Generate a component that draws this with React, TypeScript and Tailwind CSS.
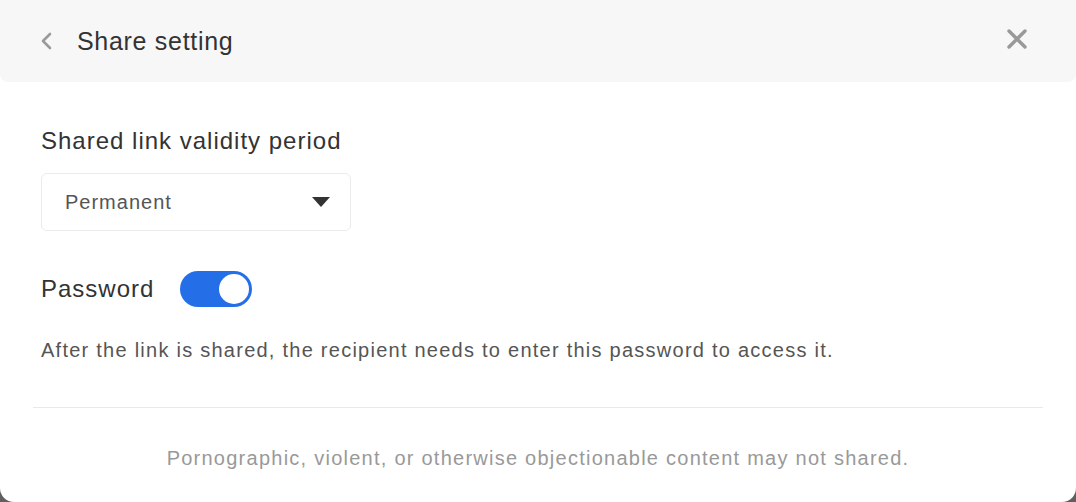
import React from "react";

export default function App() {
  return (
    <div className="w-[1076px] h-[502px] bg-[#5f5f5f] overflow-hidden" style={{ fontFamily: '"Liberation Sans", Arial, sans-serif' }}>
      <div className="w-full h-full bg-white rounded-b-[14px] flex flex-col">
        <div className="h-[82px] bg-[#f7f7f7] rounded-b-[8px] flex items-center pl-[40px] pr-[48px] shrink-0">
          <svg width="14" height="18" viewBox="0 0 14 18" className="mr-[23px]">
            <path d="M10 2 L3 9 L10 16" fill="none" stroke="#9a9a9a" strokeWidth="2.6" strokeLinecap="round" strokeLinejoin="round" />
          </svg>
          <span className="text-[25px] tracking-[0.7px] text-[#333] leading-none">Share setting</span>
          <div className="flex-1" />
          <svg width="22" height="22" viewBox="0 0 22 22" className="mb-[5px]">
            <path d="M3 3 L19 19 M19 3 L3 19" fill="none" stroke="#999" strokeWidth="3.4" strokeLinecap="round" />
          </svg>
        </div>
        <div className="flex flex-col px-[41px] pt-[44px]">
          <div className="text-[24px] tracking-[1px] text-[#333] leading-[30px]">Shared link validity period</div>
          <div className="mt-[17px] w-[310px] h-[58px] border border-[#ebebeb] rounded-[6px] flex items-center pl-[23px] pr-[20px]">
            <span className="text-[20px] tracking-[1px] text-[#555] flex-1">Permanent</span>
            <svg width="18" height="10" viewBox="0 0 18 10">
              <path d="M0 0 L18 0 L9 10 Z" fill="#333" />
            </svg>
          </div>
          <div className="mt-[40px] flex items-center h-[36px]">
            <span className="text-[24px] tracking-[1px] text-[#333]">Password</span>
            <div className="ml-[26px] w-[72px] h-[36px] rounded-full bg-[#246fe8] flex items-center justify-end pr-[3px]">
              <div className="w-[30px] h-[30px] rounded-full bg-white" />
            </div>
          </div>
          <div className="mt-[30px] text-[20px] tracking-[1.25px] text-[#555] leading-[26px] whitespace-nowrap">
            After the link is shared, the recipient needs to enter this password to access it.
          </div>
        </div>
        <div className="mt-[44px] mx-[33px] h-px bg-[#e9e9e9]" />
        <div className="mt-[37px] text-center text-[20px] tracking-[1.25px] text-[#999] leading-[26px] whitespace-nowrap">
          Pornographic, violent, or otherwise objectionable content may not shared.
        </div>
      </div>
    </div>
  );
}
